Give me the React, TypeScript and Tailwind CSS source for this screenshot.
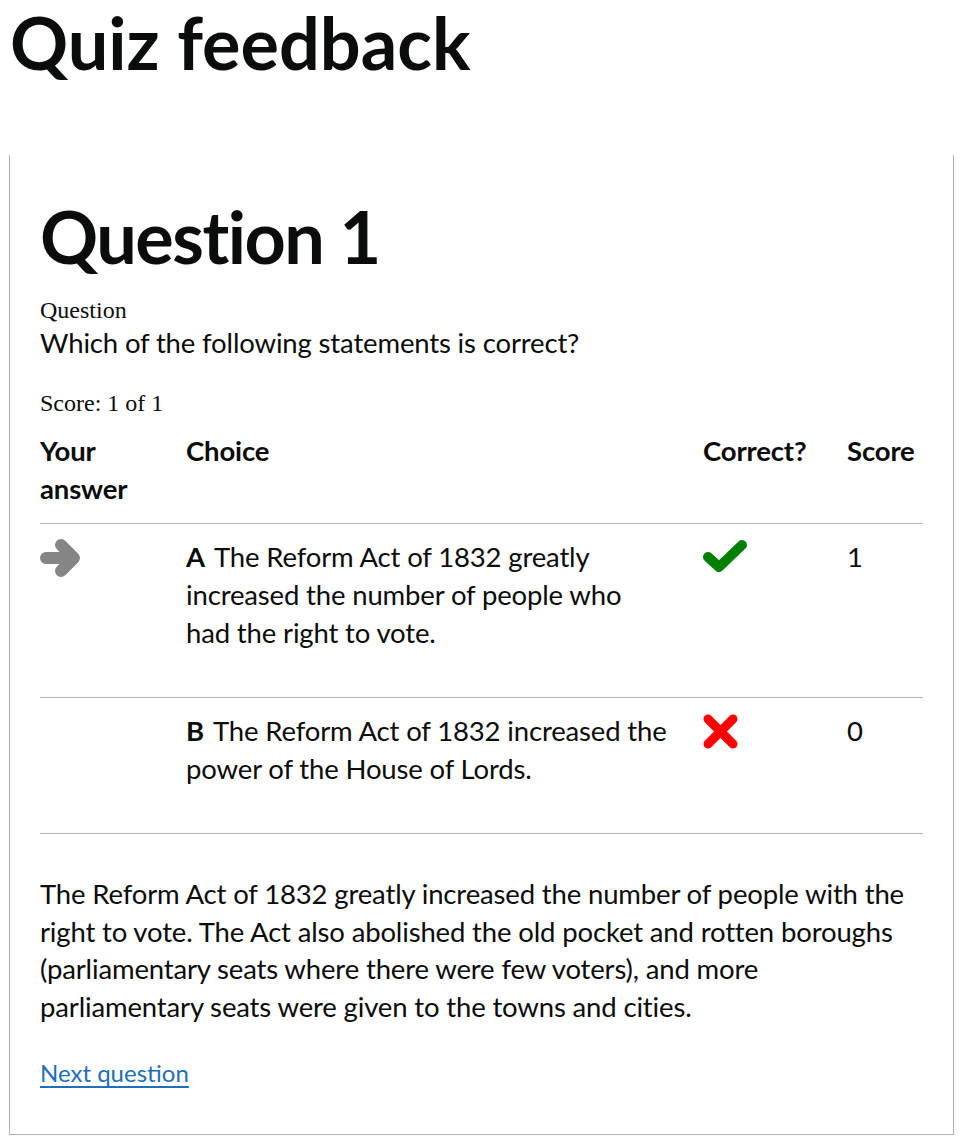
import React from 'react'

const sans = { fontFamily: 'Lato, "Noto Sans", Arial, sans-serif' }
const serif = { fontFamily: '"Liberation Serif", "Times New Roman", serif' }

function ArrowIcon() {
  return (
    <svg width="42" height="44" viewBox="0 0 42 44" className="block">
      <path d="M6 20 H33 M21 7 L34 20 L21 33" fill="none" stroke="#858585" strokeWidth="12" strokeLinecap="round" strokeLinejoin="round" />
    </svg>
  )
}

function CheckIcon() {
  return (
    <svg width="44" height="34" viewBox="0 0 44 34" className="block">
      <path d="M5 17 L16 27 L39 5" fill="none" stroke="#008000" strokeWidth="10" strokeLinecap="round" strokeLinejoin="round" />
    </svg>
  )
}

function CrossIcon() {
  return (
    <svg width="36" height="36" viewBox="0 0 36 36" className="block">
      <path d="M5 5 L30 30 M30 5 L5 30" fill="none" stroke="#ff0000" strokeWidth="9" strokeLinecap="round" />
    </svg>
  )
}

const choices = [
  { letter: 'A', text: 'The Reform Act of 1832 greatly increased the number of people who had the right to vote.', picked: true, correct: true, score: 1 },
  { letter: 'B', text: 'The Reform Act of 1832 increased the power of the House of Lords.', picked: false, correct: false, score: 0 },
]

export default function App() {
  return (
    <div className="min-h-screen bg-white text-[#0b0c0c]">
      <h1 className="pl-[10px] pt-[5px] text-[72px] font-bold leading-[75px] mb-[75px]" style={sans}>Quiz feedback</h1>

      <div className="mx-[9px] border-x border-b border-[#b1b4b6] px-[30px] pt-[44px] pb-[46px]">
        <h2 className="text-[72px] font-bold leading-[75px] mb-[23px] tracking-[-1.5px]" style={sans}>Question 1</h2>

        <div className="text-[24px] leading-[27px]" style={serif}>Question</div>
        <p className="text-[27.5px] leading-[38px] mb-[28px] tracking-[-0.15px]" style={sans}>Which of the following statements is correct?</p>

        <div className="text-[24px] leading-[27px]" style={serif}>Score: 1 of 1</div>

        <table className="w-full border-collapse text-[27.5px] leading-[38px] tracking-[-0.15px]" style={sans}>
          <thead>
            <tr className="border-b border-[#b1b4b6] text-left align-top">
              <th className="w-[146px] pt-[15px] pb-[15px] pr-[30px] font-bold">Your answer</th>
              <th className="pt-[15px] pb-[15px] pr-[30px] font-bold">Choice</th>
              <th className="w-[144px] pt-[15px] pb-[15px] pr-[30px] font-bold whitespace-nowrap">Correct?</th>
              <th className="w-[76px] pt-[15px] pb-[15px] font-bold">Score</th>
            </tr>
          </thead>
          <tbody>
            {choices.map(c => (
              <tr key={c.letter} className="border-b border-[#b1b4b6] align-top">
                <td className="pt-[14px] pb-[15px] pr-[30px]">{c.picked && <ArrowIcon />}</td>
                <td className="pt-[14px] pb-[15px] pr-[30px]">
                  <p className="mb-[30px] max-w-[483px]">
                    <span className="font-bold mr-[9px]">{c.letter}</span>
                    {c.text}
                  </p>
                </td>
                <td className="pt-[14px] pb-[15px] pr-[30px]">
                  <div className="pt-[2px]">{c.correct ? <CheckIcon /> : <CrossIcon />}</div>
                </td>
                <td className="pt-[14px] pb-[15px]">{c.score}</td>
              </tr>
            ))}
          </tbody>
        </table>

        <p className="mt-[41px] mb-[33px] text-[27.5px] leading-[37.5px] tracking-[-0.15px]" style={sans}>
          The Reform Act of 1832 greatly increased the number of people with the right to vote. The Act also abolished the old pocket and rotten boroughs (parliamentary seats where there were few voters), and more parliamentary seats were given to the towns and cities.
        </p>

        <a href="#" className="text-[24px] leading-[30px] text-[#1d70b8] underline underline-offset-[4px] decoration-[2px]" style={sans}>Next question</a>
      </div>
    </div>
  )
}
